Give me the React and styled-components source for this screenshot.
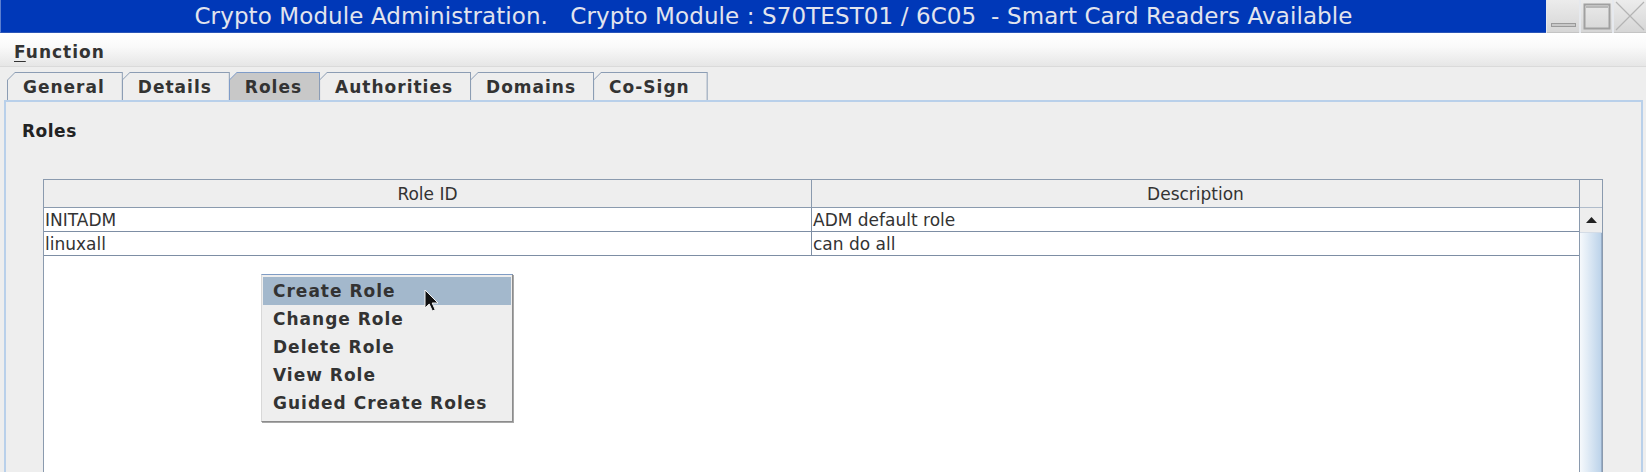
import styled, { createGlobalStyle } from "styled-components";

const GlobalStyle = createGlobalStyle`
  html, body {
    margin: 0;
    padding: 0;
    background: #eeeeee;
  }
  body {
    font-family: "DejaVu Sans", "Noto Sans", sans-serif;
    color: #333333;
  }
`;

const tabs = ["General", "Details", "Roles", "Authorities", "Domains", "Co-Sign"];

const roles = [
  { id: "INITADM", description: "ADM default role" },
  { id: "linuxall", description: "can do all" },
];

const menuItems = [
  "Create Role",
  "Change Role",
  "Delete Role",
  "View Role",
  "Guided Create Roles",
];

const App = () => {
  return (
    <>
      <GlobalStyle />
      <Window>
        <TitleBar>
          <TitleText>
            {"Crypto Module Administration.   Crypto Module : S70TEST01 / 6C05  - Smart Card Readers Available"}
          </TitleText>
          <WindowButtons>
            <WindowButton>
              <svg width="32" height="32" viewBox="0 0 32 32">
                <rect x="4.5" y="23.5" width="24" height="3" fill="#c8c8c8" stroke="#9a9a9a" />
              </svg>
            </WindowButton>
            <WindowButton>
              <svg width="31" height="32" viewBox="0 0 31 32">
                <rect x="3.5" y="4.5" width="25" height="24" fill="none" stroke="#a0a0a0" strokeWidth="2" />
                <rect x="5" y="6" width="22" height="2" fill="#b8b8b8" />
              </svg>
            </WindowButton>
            <WindowButton>
              <svg width="32" height="32" viewBox="0 0 32 32">
                <path d="M2 2 L30 30 M30 2 L2 30" stroke="#b4b4b4" strokeWidth="1.2" />
              </svg>
            </WindowButton>
          </WindowButtons>
        </TitleBar>

        <MenuBar>
          <MenuTitle>
            <Mnemonic>F</Mnemonic>unction
          </MenuTitle>
        </MenuBar>

        <TabStrip>
          {tabs.map((t) => (
            <Tab key={t} $selected={t === "Roles"}>
              <TabFace $selected={t === "Roles"}>{t}</TabFace>
            </Tab>
          ))}
        </TabStrip>

        <Panel>
          <SectionLabel>Roles</SectionLabel>
          <TableFrame>
            <HeaderRow>
              <HeaderCell>Role ID</HeaderCell>
              <HeaderCell>Description</HeaderCell>
            </HeaderRow>
            <Corner />
            <Viewport>
              {roles.map((r) => (
                <Row key={r.id}>
                  <Cell>{r.id}</Cell>
                  <Cell>{r.description}</Cell>
                </Row>
              ))}
            </Viewport>
            <ScrollBar>
              <ScrollButton>
                <svg width="11" height="6" viewBox="0 0 11 6">
                  <path d="M0 6 L5.5 0 L11 6 Z" fill="#222" />
                </svg>
              </ScrollButton>
              <ScrollTrack />
            </ScrollBar>
          </TableFrame>
        </Panel>

        <PopupMenu>
          {menuItems.map((m, i) => (
            <PopupItem key={m} $active={i === 0}>
              {m}
            </PopupItem>
          ))}
        </PopupMenu>

        {/* mouse pointer resting on the first menu item */}
        <Cursor width="16" height="24" viewBox="0 0 16 24">
          <path
            d="M1 1 L1 19 L5.2 15 L8.4 22 L11.2 20.8 L8.2 14 L14 14 Z"
            fill="#111"
            stroke="#f4f4f4"
            strokeWidth="1"
          />
        </Cursor>
      </Window>
    </>
  );
};

const Window = styled.div`
  position: relative;
  width: 1646px;
  height: 472px;
  overflow: hidden;
  display: flex;
  flex-direction: column;
  background: #eeeeee;
`;

const TitleBar = styled.div`
  display: flex;
  height: 33px;
  flex-shrink: 0;
`;

const TitleText = styled.div`
  flex: 1;
  display: flex;
  align-items: center;
  justify-content: center;
  background: #0038b8;
  border-left: 1px solid #5c7fd0;
  border-bottom: 1px solid #2a55b8;
  color: #e2e4ee;
  font-size: 23px;
  letter-spacing: 0.1px;
  white-space: pre;
`;

const WindowButtons = styled.div`
  display: flex;
  gap: 2px;
  padding-left: 1px;
  background: #e6e9ee;
`;

const WindowButton = styled.div`
  display: flex;
  height: 32px;
  background: linear-gradient(#ececec, #d6d6d6);
  border-bottom: 1px solid #c4c4c4;
`;

const MenuBar = styled.div`
  display: flex;
  align-items: center;
  height: 34px;
  flex-shrink: 0;
  padding: 4px 0 0 14px;
  box-sizing: border-box;
  background: linear-gradient(#ffffff 0%, #fafafa 40%, #e6e6e6 100%);
  border-bottom: 1px solid #dadada;
`;

const MenuTitle = styled.span`
  font-size: 17px;
  font-weight: bold;
  letter-spacing: 1px;
  color: #333333;
`;

const Mnemonic = styled.span`
  text-decoration: underline;
  text-underline-offset: 3px;
`;

const TabStrip = styled.div`
  display: flex;
  height: 28px;
  flex-shrink: 0;
  padding: 5px 0 0 7px;
`;

const Tab = styled.div`
  height: 28px;
  box-sizing: border-box;
  padding: 1px 1px 0 1px;
  margin-right: -1px;
  background: ${(p) => (p.$selected ? "#7f9cc8" : "#8c9db4")};
  clip-path: polygon(8px 0, 100% 0, 100% 100%, 0 100%, 0 8px);
`;

const TabFace = styled.div`
  display: flex;
  align-items: center;
  height: 100%;
  padding: 0 17px 0 15px;
  background: ${(p) => (p.$selected ? "#c8c8c8" : "#eeeeee")};
  clip-path: polygon(7px 0, 100% 0, 100% 100%, 0 100%, 0 7px);
  font-size: 17px;
  font-weight: bold;
  letter-spacing: 1px;
  color: #333333;
`;

const Panel = styled.div`
  flex: 1;
  display: flex;
  flex-direction: column;
  margin: 0 3px 0 4px;
  border: 2px solid #b9d0ea;
  border-bottom: none;
  min-height: 0;
`;

const SectionLabel = styled.div`
  padding: 17px 0 0 16px;
  line-height: 24px;
  font-size: 17px;
  font-weight: bold;
  letter-spacing: 0.5px;
  color: #222222;
`;

const TableFrame = styled.div`
  display: grid;
  grid-template-columns: 1fr 22px;
  grid-template-rows: 28px 320px;
  margin: 36px 38px 0 37px;
  border: 1px solid #8a9aae;
  background: #eeeeee;
  flex-shrink: 0;
`;

const HeaderRow = styled.div`
  display: grid;
  grid-template-columns: 768px 1fr;
  border-bottom: 1px solid #8a9aae;
  border-right: 1px solid #8a9aae;
  background: #eeeeee;
`;

const HeaderCell = styled.div`
  display: flex;
  align-items: center;
  justify-content: center;
  font-size: 17px;
  color: #333333;
  &:first-child {
    border-right: 1px solid #8a9aae;
  }
`;

const Corner = styled.div`
  border-bottom: 1px solid #b0bccb;
  background: #eeeeee;
`;

const Viewport = styled.div`
  background: #ffffff;
  border-right: 1px solid #8a9aae;
`;

const Row = styled.div`
  display: grid;
  grid-template-columns: 768px 1fr;
  height: 24px;
  box-sizing: border-box;
  border-bottom: 1px solid #7d8ea4;
`;

const Cell = styled.div`
  display: flex;
  align-items: center;
  padding-left: 1px;
  font-size: 17px;
  color: #333333;
  white-space: nowrap;
  &:first-child {
    border-right: 1px solid #7d8ea4;
  }
`;

const ScrollBar = styled.div`
  display: flex;
  flex-direction: column;
`;

const ScrollButton = styled.div`
  display: flex;
  align-items: center;
  justify-content: center;
  height: 24px;
  background: #eeeeee;
  border-bottom: 1px solid #d4dce6;
`;

const ScrollTrack = styled.div`
  flex: 1;
  background: linear-gradient(to right, #f6f9fc 0%, #e2ecf6 35%, #bcd3ea 100%);
  border-right: 1px solid #98aec8;
`;

const PopupMenu = styled.div`
  position: absolute;
  left: 261px;
  top: 274px;
  width: 249px;
  padding: 2px 0 4px 1px;
  background: #eeeeee;
  border-top: 1px solid #7f9cc4;
  border-left: 1px solid #d8d8d8;
  border-right: 1px solid #8c8c8c;
  border-bottom: 1px solid #8c8c8c;
  box-shadow: 1px 1px 0 #a8a8a8;
`;

const PopupItem = styled.div`
  display: flex;
  align-items: center;
  height: 28px;
  padding-left: 10px;
  margin-right: 1px;
  background: ${(p) => (p.$active ? "#a3b8cc" : "transparent")};
  font-size: 17px;
  font-weight: bold;
  letter-spacing: 1px;
  color: #333333;
`;

const Cursor = styled.svg`
  position: absolute;
  left: 424px;
  top: 289px;
`;

export default App;
